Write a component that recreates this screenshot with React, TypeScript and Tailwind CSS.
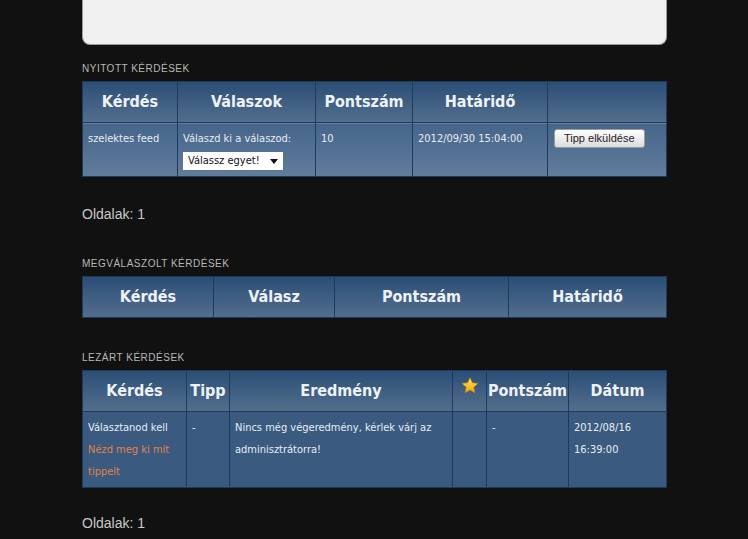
import React from 'react';

const cellFont = { fontFamily: '"DejaVu Sans Condensed", "DejaVu Sans", Verdana, sans-serif' };

function SectionTitle({ children }: { children: React.ReactNode }) {
  return (
    <h2
      className="text-[10px] leading-[12px] uppercase tracking-[0.5px] text-[#b8b8b8] mb-[6px]"
      style={{ fontFamily: '"Liberation Sans", Arial, sans-serif' }}
    >
      {children}
    </h2>
  );
}

function Pager() {
  return (
    <p className="text-[14px] leading-[20px] text-[#c8c8c8]" style={{ fontFamily: '"Liberation Sans", Arial, sans-serif' }}>
      Oldalak: 1
    </p>
  );
}

const th = 'h-[41px] border-r border-[#1f3b5b] last:border-r-0 text-center text-[16px] font-bold text-[#eef2f7]';
const td = 'align-top border-r border-[#1f3b5b] last:border-r-0 px-[5px] pt-[5px] text-[11px] leading-[22px] text-[#e8edf3]';

export default function App() {
  return (
    <div className="bg-[#111111] w-[748px] h-[539px] overflow-hidden">
      <div className="w-[585px] ml-[82px]">
        {/* top box */}
        <div className="h-[45px] bg-[#f0f0f0] border border-[#9a9a9a] border-t-0 rounded-b-[8px]" />

        <div className="mt-[18px]">
          <SectionTitle>Nyitott kérdések</SectionTitle>
          <table className="w-full border-collapse border border-[#1f3b5b]" style={cellFont}>
            <thead className="bg-gradient-to-b from-[#2b4e76] to-[#546f8e]">
              <tr>
                <th className={`${th} w-[95px]`}>Kérdés</th>
                <th className={`${th} w-[138px]`}>Válaszok</th>
                <th className={`${th} w-[97px]`}>Pontszám</th>
                <th className={`${th} w-[135px]`}>Határidő</th>
                <th className={th}></th>
              </tr>
            </thead>
            <tbody className="bg-gradient-to-b from-[#45658a] to-[#617d9c] border-t border-[#1f3b5b]">
              <tr className="h-[54px]">
                <td className={td}>szelektes feed</td>
                <td className={td}>
                  <div className="leading-[14px] mt-[4px]">Válaszd ki a válaszod:</div>
                  <div className="mt-[6px] mb-[5px] w-[100px] h-[18px] bg-white text-[#111] text-[11px] leading-[18px] pl-[5px] flex items-center justify-between pr-[5px]">
                    <span>Válassz egyet!</span>
                    <svg width="8" height="5" viewBox="0 0 8 5"><path d="M0 0h8L4 5z" fill="#111" /></svg>
                  </div>
                </td>
                <td className={td}>10</td>
                <td className={td}>2012/09/30 15:04:00</td>
                <td className={td}>
                  <button
                    className="mt-[1px] ml-[1px] h-[19px] px-[9px] text-[11px] leading-[17px] text-[#222] bg-gradient-to-b from-[#ffffff] to-[#dcdcdc] border border-[#9a9a9a] rounded-[3px]"
                    style={{ fontFamily: '"Liberation Sans", Arial, sans-serif' }}
                  >
                    Tipp elküldése
                  </button>
                </td>
              </tr>
            </tbody>
          </table>
        </div>

        <div className="mt-[27px]">
          <Pager />
        </div>

        <div className="mt-[34px]">
          <SectionTitle>Megválaszolt kérdések</SectionTitle>
          <table className="w-full border-collapse border border-[#1f3b5b]" style={cellFont}>
            <thead className="bg-gradient-to-b from-[#2b4e76] to-[#546f8e]">
              <tr>
                <th className={`${th} w-[131px]`}>Kérdés</th>
                <th className={`${th} w-[121px]`}>Válasz</th>
                <th className={`${th} w-[174px]`}>Pontszám</th>
                <th className={th}>Határidő</th>
              </tr>
            </thead>
          </table>
        </div>

        <div className="mt-[34px]">
          <SectionTitle>Lezárt kérdések</SectionTitle>
          <table className="w-full border-collapse border border-[#1f3b5b]" style={cellFont}>
            <thead className="bg-gradient-to-b from-[#2b4e76] to-[#546f8e]">
              <tr>
                <th className={`${th} w-[104px]`}>Kérdés</th>
                <th className={`${th} w-[43px]`}>Tipp</th>
                <th className={`${th} w-[223px]`}>Eredmény</th>
                <th className={`${th} w-[34px] align-top pt-[6px]`}>
                  <svg width="18" height="17" viewBox="0 0 24 23" className="mx-auto">
                    <defs>
                      <linearGradient id="st" x1="0" y1="0" x2="0" y2="1">
                        <stop offset="0" stopColor="#ffe55a" />
                        <stop offset="1" stopColor="#f0a400" />
                      </linearGradient>
                    </defs>
                    <path
                      d="M12 1l3.2 6.9 7.5.9-5.6 5.1 1.5 7.4L12 17.6l-6.6 3.7 1.5-7.4L1.3 8.8l7.5-.9z"
                      fill="url(#st)"
                      stroke="#c98a00"
                      strokeWidth="0.8"
                    />
                  </svg>
                </th>
                <th className={`${th} w-[82px]`}>Pontszám</th>
                <th className={th}>Dátum</th>
              </tr>
            </thead>
            <tbody className="bg-[#3a5a7f] border-t border-[#1f3b5b]">
              <tr className="h-[76px]">
                <td className={td}>
                  <div>Választanod kell</div>
                  <div className="text-[#e0834a]">Nézd meg ki mit tippelt</div>
                </td>
                <td className={td}>-</td>
                <td className={td}>Nincs még végeredmény, kérlek várj az adminisztrátorra!</td>
                <td className={td}></td>
                <td className={td}>-</td>
                <td className={td}>2012/08/16 16:39:00</td>
              </tr>
            </tbody>
          </table>
        </div>

        <div className="mt-[25px]">
          <Pager />
        </div>
      </div>
    </div>
  );
}
